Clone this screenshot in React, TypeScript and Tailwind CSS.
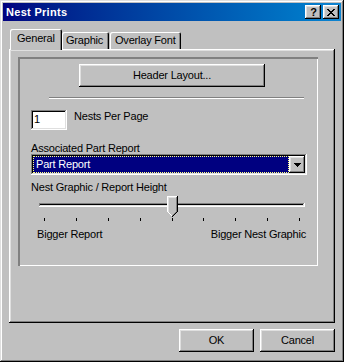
import React from "react";

const raised =
  "shadow-[inset_-1px_-1px_0_#000000,inset_1px_1px_0_#ffffff,inset_-2px_-2px_0_#808080,inset_2px_2px_0_#dfdfdf]";
const sunken =
  "shadow-[inset_-1px_-1px_0_#ffffff,inset_1px_1px_0_#808080,inset_-2px_-2px_0_#dfdfdf,inset_2px_2px_0_#000000]";

function CloseGlyph() {
  const px: [number, number, number][] = [
    [0, 0, 2], [6, 0, 2],
    [1, 1, 2], [5, 1, 2],
    [2, 2, 4],
    [3, 3, 2],
    [2, 4, 4],
    [1, 5, 2], [5, 5, 2],
    [0, 6, 2], [6, 6, 2],
  ];
  return (
    <svg width="8" height="7" viewBox="0 0 8 7" shapeRendering="crispEdges">
      {px.map(([x, y, w], i) => (
        <rect key={i} x={x} y={y} width={w} height={1} fill="#000" />
      ))}
    </svg>
  );
}

function ArrowDown() {
  return (
    <svg width="7" height="4" viewBox="0 0 7 4" shapeRendering="crispEdges">
      <rect x="0" y="0" width="7" height="1" fill="#000" />
      <rect x="1" y="1" width="5" height="1" fill="#000" />
      <rect x="2" y="2" width="3" height="1" fill="#000" />
      <rect x="3" y="3" width="1" height="1" fill="#000" />
    </svg>
  );
}

function Thumb() {
  return (
    <svg width="11" height="21" viewBox="0 0 11 21" shapeRendering="crispEdges">
      <polygon points="0,0 11,0 11,16 5.5,21 0,16" fill="#c0c0c0" />
      <rect x="0" y="0" width="10" height="1" fill="#fff" />
      <rect x="0" y="0" width="1" height="16" fill="#fff" />
      <rect x="1" y="16" width="1" height="1" fill="#fff" />
      <rect x="2" y="17" width="1" height="1" fill="#fff" />
      <rect x="3" y="18" width="1" height="1" fill="#fff" />
      <rect x="4" y="19" width="1" height="1" fill="#fff" />
      <rect x="1" y="1" width="8" height="1" fill="#dfdfdf" />
      <rect x="1" y="1" width="1" height="15" fill="#dfdfdf" />
      <rect x="9" y="1" width="1" height="15" fill="#808080" />
      <rect x="8" y="16" width="1" height="1" fill="#808080" />
      <rect x="7" y="17" width="1" height="1" fill="#808080" />
      <rect x="6" y="18" width="1" height="1" fill="#808080" />
      <rect x="5" y="19" width="1" height="1" fill="#808080" />
      <rect x="10" y="0" width="1" height="16" fill="#000" />
      <rect x="9" y="16" width="1" height="1" fill="#000" />
      <rect x="8" y="17" width="1" height="1" fill="#000" />
      <rect x="7" y="18" width="1" height="1" fill="#000" />
      <rect x="6" y="19" width="1" height="1" fill="#000" />
      <rect x="5" y="20" width="1" height="1" fill="#000" />
    </svg>
  );
}

export default function App() {
  const ticks = Array.from({ length: 9 }, (_, i) => i);
  return (
    <div className="w-[344px] h-[362px] bg-[#c0c0c0] p-[3px] flex flex-col shadow-[inset_-1px_-1px_0_#000000,inset_1px_1px_0_#dfdfdf,inset_-2px_-2px_0_#808080,inset_2px_2px_0_#ffffff] font-['Liberation_Sans',Arial,sans-serif] text-[11px] leading-[13px] tracking-[-0.2px] text-black">
      {/* Title bar */}
      <div className="h-[18px] flex items-center justify-between bg-linear-to-r from-[#000080] to-[#1084d0] pl-[3px] pr-[2px]">
        <span className="text-white font-bold text-[11px] tracking-[0.3px]">Nest Prints</span>
        <div className="flex gap-[2px]">
          <div className={`w-[16px] h-[14px] bg-[#c0c0c0] flex items-center justify-center font-bold text-[11px] leading-[11px] pl-[1px] ${raised}`}>
            ?
          </div>
          <div className={`w-[16px] h-[14px] bg-[#c0c0c0] flex items-center justify-center ${raised}`}>
            <CloseGlyph />
          </div>
        </div>
      </div>

      {/* Tabs */}
      <div className="mt-[8px] ml-[7px] h-[21px] flex items-start relative z-10">
        <div className="h-[21px] w-[52px] bg-[#c0c0c0] rounded-t-[2px] shadow-[inset_1px_1px_0_#ffffff,inset_-1px_0_0_#000000,inset_-2px_0_0_#808080] pt-[3px] pl-[7px]">
          General
        </div>
        <div className="mt-[3px] h-[17px] w-[47px] bg-[#c0c0c0] rounded-t-[2px] shadow-[inset_1px_1px_0_#ffffff,inset_-1px_0_0_#000000,inset_-2px_0_0_#808080] pt-[2px] pl-[4px]">
          Graphic
        </div>
        <div className="ml-[1px] mt-[3px] h-[17px] w-[71px] bg-[#c0c0c0] rounded-t-[2px] shadow-[inset_1px_1px_0_#ffffff,inset_-1px_0_0_#000000,inset_-2px_0_0_#808080] pt-[2px] pl-[5px]">
          Overlay Font
        </div>
      </div>

      {/* Panel */}
      <div className="ml-[6px] -mt-[1px] w-[326px] h-[274px] bg-[#c0c0c0] shadow-[inset_-1px_-1px_0_#000000,inset_1px_1px_0_#ffffff,inset_-2px_-2px_0_#808080,inset_2px_2px_0_#dfdfdf] pt-[8px] pl-[9px]">
        <div className="w-[300px] h-[209px] flex flex-col shadow-[inset_2px_2px_0_#808080,inset_-1px_-1px_0_#ffffff]">
          <div className={`ml-[61px] mt-[7px] w-[186px] h-[23px] flex items-center justify-center ${raised}`}>
            Header Layout...
          </div>
          <div className="ml-[31px] mt-[10px] w-[255px] h-[2px] border-t border-t-[#808080] border-b border-b-white" />
          <div className="ml-[13px] mt-[11px] flex items-start">
            <div className={`w-[36px] h-[20px] bg-white pl-[3px] pt-[3px] ${sunken}`}>1</div>
            <div className="ml-[7px]">Nests Per Page</div>
          </div>
          <div className="ml-[13px] mt-[13px] leading-[11px]">Associated Part Report</div>
          <div className={`ml-[13px] w-[276px] h-[21px] bg-white p-[2px] flex ${sunken}`}>
            <div className="w-[256px] h-[17px] bg-[#000080] border border-dotted border-[#ffff80] text-white pl-[2px] leading-[14px]">
              Part Report
            </div>
            <div className={`w-[16px] h-[17px] bg-[#c0c0c0] flex items-center justify-center ${raised}`}>
              <ArrowDown />
            </div>
          </div>
          <div className="ml-[13px] mt-[6px]">Nest Graphic / Report Height</div>
          <div className="ml-[21px] mt-[2px] w-[266px] h-[21px] relative">
            <div className={`absolute left-0 right-0 top-[7px] h-[4px] ${sunken}`} />
            <div className="absolute left-[128px] top-0">
              <Thumb />
            </div>
          </div>
          <div className="ml-[21px] mt-[1px] w-[266px] h-[3px] px-[5px] flex justify-between">
            {ticks.map((i) => (
              <div key={i} className="w-[1px] h-[3px] bg-black" />
            ))}
          </div>
          <div className="ml-[19px] mt-[7px] w-[269px] flex justify-between">
            <span>Bigger Report</span>
            <span>Bigger Nest Graphic</span>
          </div>
        </div>
      </div>

      {/* Buttons */}
      <div className="mt-[6px] pr-[6px] flex justify-end gap-[6px]">
        <div className={`w-[75px] h-[23px] flex items-center justify-center ${raised}`}>OK</div>
        <div className={`w-[75px] h-[23px] flex items-center justify-center ${raised}`}>Cancel</div>
      </div>
    </div>
  );
}
